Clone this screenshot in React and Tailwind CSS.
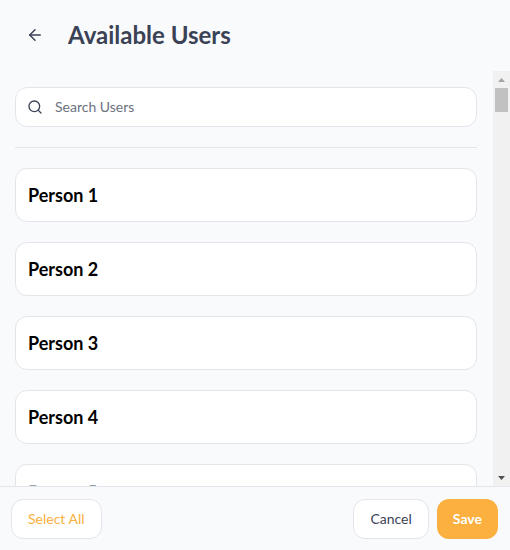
import { useState } from 'react'
import { FiArrowLeft, FiSearch } from 'react-icons/fi'

const users = [
  { id: 1, name: 'Person 1', active: true },
  { id: 2, name: 'Person 2', active: true },
  { id: 3, name: 'Person 3', active: true },
  { id: 4, name: 'Person 4', active: true },
  { id: 5, name: 'Person 5', active: false }
]

function Scrollbar() {
  return (
    <div className="flex w-[17px] shrink-0 flex-col items-center bg-[#f1f1f1]" aria-hidden="true">
      <div className="flex h-[17px] items-center">
        <svg width="7" height="4" viewBox="0 0 7 4" fill="#a3a3a3">
          <path d="M3.5 0 7 4H0z" />
        </svg>
      </div>
      <div className="h-6 w-[13px] bg-[#c1c1c1]" />
      <div className="mt-auto flex h-[17px] items-center">
        <svg width="7" height="4" viewBox="0 0 7 4" fill="#505050">
          <path d="M0 0h7L3.5 4z" />
        </svg>
      </div>
    </div>
  )
}

export default function App() {
  const [search, setSearch] = useState('')
  const [selected, setSelected] = useState([])

  const filtered = users.filter(user => user.name.toLowerCase().includes(search.toLowerCase()))

  const toggleUser = (id) => {
    setSelected(prev => (prev.includes(id) ? prev.filter(item => item !== id) : [...prev, id]))
  }

  return (
    <div className="flex h-screen flex-col bg-[#f9fafc] font-['Lato',sans-serif] text-[#3b4256]">
      {/* Header */}
      <header className="flex shrink-0 items-center gap-6 px-[26px] pt-[17px] pb-[18px]">
        <button type="button" aria-label="Back">
          <FiArrowLeft className="size-[18px]" />
        </button>
        <h1 className="text-2xl leading-9 font-bold">Available Users</h1>
      </header>

      {/* User list */}
      <div className="flex min-h-0 flex-1">
        <main className="flex min-w-0 flex-1 flex-col gap-5 overflow-y-auto px-4 pt-4 pb-5 pl-[15px] [scrollbar-width:none]">
          <label className="flex h-10 shrink-0 items-center gap-3 rounded-xl border border-[#e4e5ea] bg-white px-[11px]">
            <FiSearch className="size-4" />
            <input
              type="text"
              aria-label="Search Users"
              placeholder="Search Users"
              value={search}
              onChange={e => setSearch(e.target.value)}
              className="min-w-0 flex-1 text-sm outline-none placeholder:text-[#6b7180]"
            />
          </label>

          <hr className="shrink-0 border-[#e4e5ea]" />

          {filtered.map(user => (
            <button
              key={user.id}
              type="button"
              aria-pressed={selected.includes(user.id)}
              onClick={() => toggleUser(user.id)}
              className={`flex h-[54px] shrink-0 items-center rounded-xl border border-[#e4e5ea] bg-white px-3 text-left text-lg aria-pressed:border-[#fbb040] ${
                user.active ? 'font-bold text-black' : 'text-gray-400'
              }`}
            >
              {user.name}
            </button>
          ))}
        </main>
        <Scrollbar />
      </div>

      {/* Actions */}
      <footer className="flex shrink-0 gap-2 border-t border-[#e4e5ea] px-3 pt-3 pb-[11px] pl-[11px] text-sm">
        <button
          type="button"
          onClick={() => setSelected(users.map(user => user.id))}
          className="mr-auto h-10 rounded-xl border border-[#e4e5ea] bg-white px-4 text-[#fbb040]"
        >
          Select All
        </button>
        <button
          type="button"
          onClick={() => setSelected([])}
          className="h-10 rounded-xl border border-[#e4e5ea] bg-white px-4"
        >
          Cancel
        </button>
        <button type="button" className="h-10 rounded-xl bg-[#fbb040] px-4 font-bold text-white">
          Save
        </button>
      </footer>
    </div>
  )
}
